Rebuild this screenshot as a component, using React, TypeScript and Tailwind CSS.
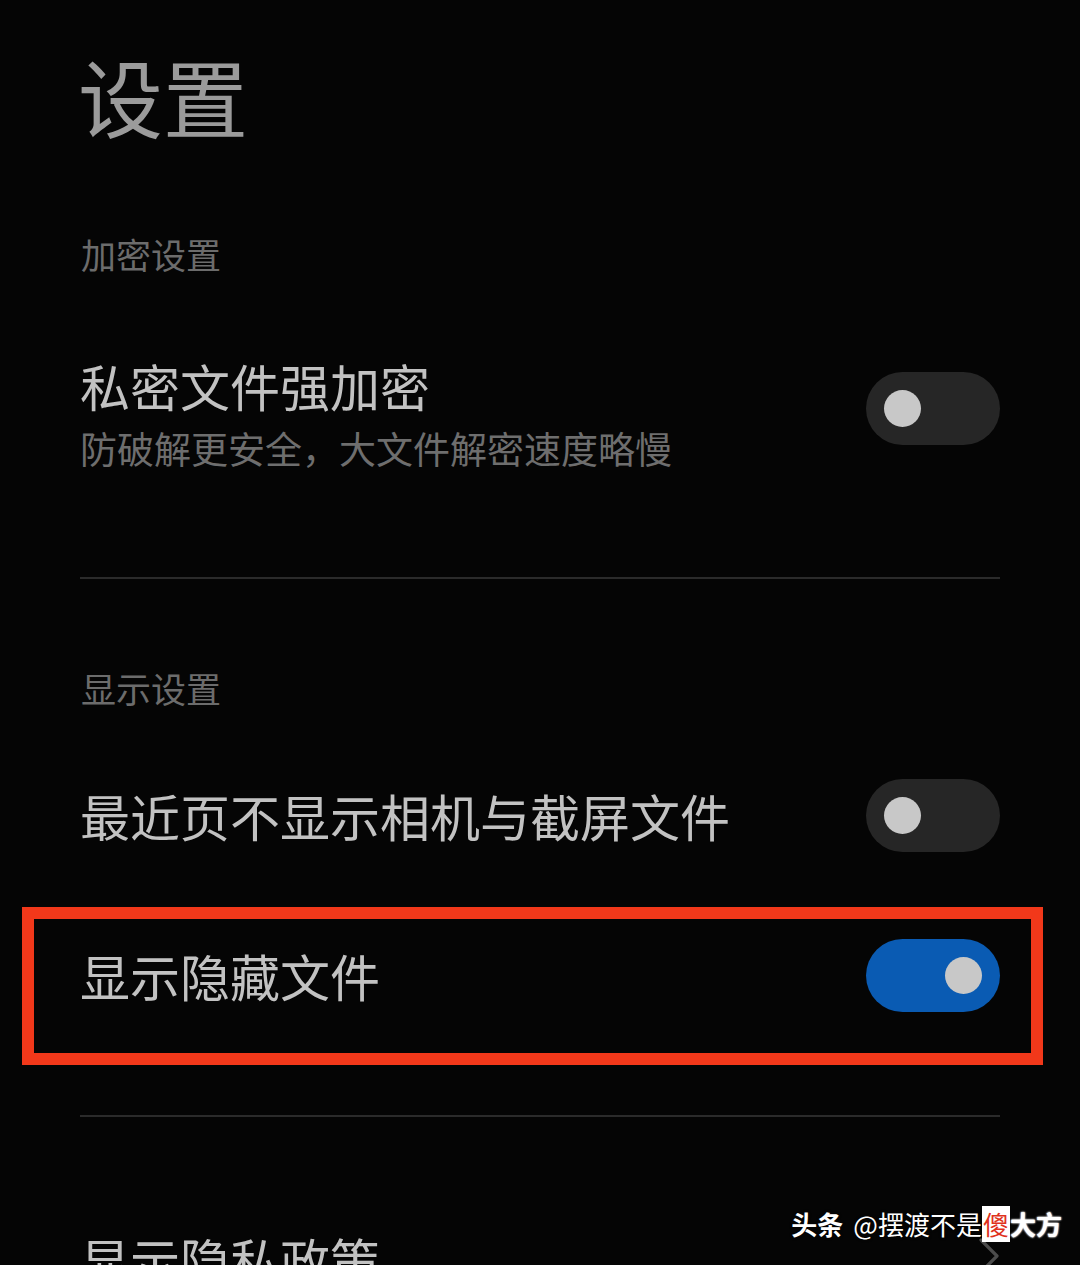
import { ChevronRight } from 'lucide-react';

type ToggleProps = {
  on?: boolean;
};

function Toggle({ on = false }: ToggleProps) {
  return (
    <div
      className={`flex h-[73px] w-[134px] shrink-0 items-center rounded-full px-[18px] ${
        on ? 'justify-end bg-[#0a5bb3]' : 'justify-start bg-[#262626]'
      }`}
    >
      <div className="h-[37px] w-[37px] rounded-full bg-[#c8c8c8]" />
    </div>
  );
}

function SectionLabel({ children }: { children: string }) {
  return <div className="pl-[81px] text-[35px] leading-[34px] text-[#6c6c6c]">{children}</div>;
}

export default function App() {
  return (
    <div className="relative h-[1265px] overflow-hidden bg-[#050505] font-['Noto_Sans_CJK_SC',sans-serif]">
      <div className="h-[190px] pl-[78px] pt-[53px] text-[85px] leading-[84px] text-[#9b9b9b]">设置</div>

      <div className="pt-[47px]">
        <SectionLabel>加密设置</SectionLabel>
      </div>

      {/* 私密文件强加密 */}
      <div className="flex h-[306px] items-start justify-between px-[80px]">
        <div className="flex flex-col pt-[86px]">
          <div className="text-[50px] leading-[56px] text-[#c2c2c2]">私密文件强加密</div>
          <div className="mt-[13px] text-[37px] leading-[44px] text-[#6e6e6e]">防破解更安全，大文件解密速度略慢</div>
        </div>
        <div className="pt-[101px]">
          <Toggle />
        </div>
      </div>

      <div className="mx-[80px] h-[2px] bg-[#2b2b2b]" />

      <div className="pt-[92px]">
        <SectionLabel>显示设置</SectionLabel>
      </div>

      <div className="mt-[62px] flex h-[96px] items-center justify-between px-[80px]">
        <div className="text-[50px] leading-[56px] text-[#c2c2c2]">最近页不显示相机与截屏文件</div>
        <Toggle />
      </div>

      {/* highlighted row */}
      <div className="ml-[22px] mr-[37px] mt-[44px] flex h-[158px] items-center justify-between border-[12px] border-[#f2381a] pb-[22px] pl-[46px] pr-[31px]">
        <div className="text-[50px] leading-[56px] text-[#c2c2c2]">显示隐藏文件</div>
        <Toggle on />
      </div>

      <div className="mx-[80px] mt-[50px] h-[2px] bg-[#2b2b2b]" />

      <div className="mt-[114px] flex items-start justify-between pl-[80px] pr-[59px]">
        <div className="text-[50px] leading-[56px] text-[#c2c2c2]">显示隐私政策</div>
        <ChevronRight className="mt-[-7px] h-[64px] w-[64px] text-[#4c4c4c]" strokeWidth={1.2} />
      </div>

      {/* watermark */}
      <div className="absolute right-[18px] top-[1206px] flex items-center text-[26px] leading-[36px] text-white [text-shadow:0_0_3px_#000]">
        <span className="mr-[10px] font-bold">头条</span>
        <span>@摆渡不是</span>
        <span className="bg-white px-[1px] text-[#e0321c] [text-shadow:none]">傻</span>
        <span className="font-bold [text-shadow:0_0_2px_#fff,0_0_2px_#fff]">大方</span>
      </div>
    </div>
  );
}
